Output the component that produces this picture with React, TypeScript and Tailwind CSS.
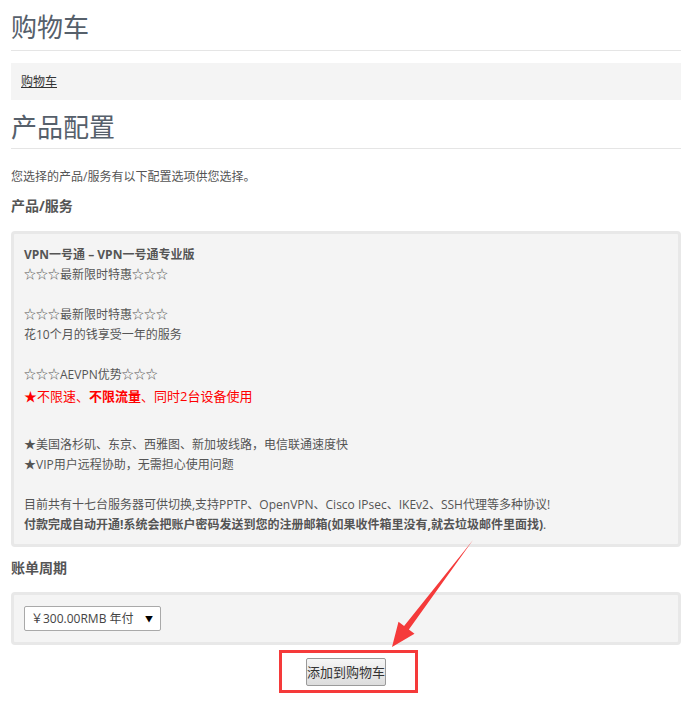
export default function App() {
  return (
    <div className="relative min-h-[701px] bg-white pl-[11px] pr-[6px] text-[12px] leading-5 text-[#555] [font-family:'Open_Sans','Noto_Sans_CJK_SC',sans-serif]">
      <h1 className="border-b border-[#e5e5e5] pt-[11px] pb-[6px] text-[26px] font-normal leading-[33px] text-[#56606b]">
        购物车
      </h1>

      <div className="mt-[12px] flex h-[37px] items-center bg-[#f4f4f4] px-[10px]">
        <a href="#" className="text-[#333] underline">
          购物车
        </a>
      </div>

      <h2 className="border-b border-[#e5e5e5] pt-[12px] pb-[5px] text-[26px] font-normal leading-[31px] text-[#56606b]">
        产品配置
      </h2>

      <p className="mt-[18px]">您选择的产品/服务有以下配置选项供您选择。</p>
      <h3 className="mt-[9px] text-[14px] font-bold leading-5 text-[#555]">产品/服务</h3>

      <div className="mt-[15px] rounded-[4px] border-[3px] border-[#e8e8e8] bg-[#f4f4f4] px-[10px] pt-[11px] pb-[9px]">
        <div className="font-bold">VPN一号通 – VPN一号通专业版</div>
        <div>☆☆☆最新限时特惠☆☆☆</div>
        <div className="h-5" />
        <div>☆☆☆最新限时特惠☆☆☆</div>
        <div>花10个月的钱享受一年的服务</div>
        <div className="h-5" />
        <div>☆☆☆AEVPN优势☆☆☆</div>
        <div className="h-[22px] text-[13px] leading-[22px] text-[#ff0000]">
          ★不限速、<b>不限流量</b>、同时2台设备使用
        </div>
        <div className="h-[28px]" />
        <div>★美国洛杉矶、东京、西雅图、新加坡线路，电信联通速度快</div>
        <div>★VIP用户远程协助，无需担心使用问题</div>
        <div className="h-5" />
        <div>目前共有十七台服务器可供切换,支持PPTP、OpenVPN、Cisco IPsec、IKEv2、SSH代理等多种协议!</div>
        <div>
          <b>付款完成自动开通!系统会把账户密码发送到您的注册邮箱(如果收件箱里没有,就去垃圾邮件里面找)</b>.
        </div>
      </div>

      <h3 className="mt-[11px] text-[14px] font-bold leading-5 text-[#555]">账单周期</h3>

      <div className="mt-[14px] rounded-[4px] border-[3px] border-[#e8e8e8] bg-[#f4f4f4] px-[10px] py-[11px]">
        <div className="flex h-[25px] w-[137px] items-center justify-between whitespace-nowrap rounded-[2px] border border-[#a9a9a9] bg-white pl-[6px] pr-[7px] text-[12px] text-[#444]">
          <span>￥300.00RMB 年付</span>
          <span className="text-[8px] text-black">▼</span>
        </div>
      </div>

      <div className="mt-[5px] flex justify-center">
        <div className="ml-[5px] flex h-[43px] w-[139px] items-center justify-center border-[3px] border-[#f53a3a]">
          <button className="mr-[5px] h-[28px] w-[80px] rounded-[2px] border border-[#9a9a9a] bg-gradient-to-b from-[#f6f6f6] to-[#dcdcdc] text-[13px] text-[#333]">
            添加到购物车
          </button>
        </div>
      </div>

      <svg className="pointer-events-none absolute left-0 top-0" width="687" height="701" viewBox="0 0 687 701">
        <polygon
          points="473,540 408.9,629.6 414.5,633.8 392,647 398.5,621.8 404.1,626 "
          fill="#f53a3a"
        />
      </svg>
    </div>
  );
}
